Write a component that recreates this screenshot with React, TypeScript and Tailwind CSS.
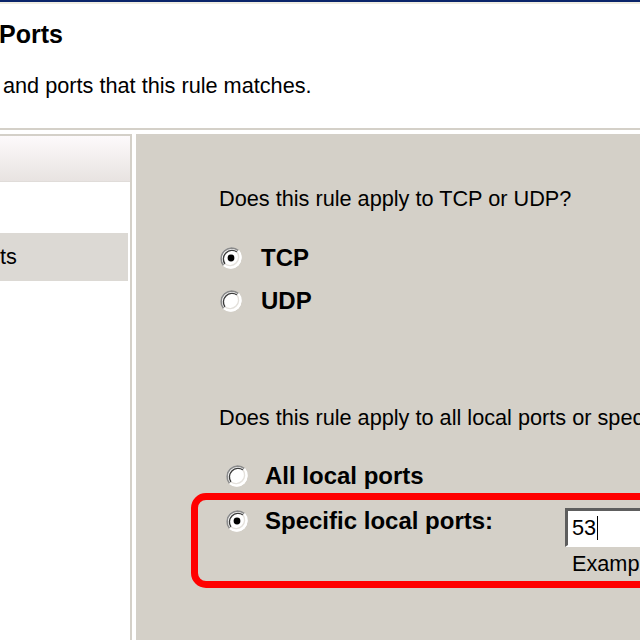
import React from "react";

const font = { fontFamily: '"Liberation Sans", Arial, sans-serif' };

function Radio({ checked }: { checked?: boolean }) {
  return (
    <svg width="24" height="24" viewBox="0 0 24 24" className="shrink-0">
      <circle cx="12" cy="12" r="10.5" fill="#ffffff" />
      {/* sunken edge: dark top-left, light bottom-right */}
      <path d="M4.6 19.4 A10.5 10.5 0 0 1 19.4 4.6" fill="none" stroke="#8a8a8a" strokeWidth="1.6" />
      <path d="M6 18 A8.6 8.6 0 0 1 18 6" fill="none" stroke="#3c3c3c" strokeWidth="1.4" />
      <path d="M19.4 4.6 A10.5 10.5 0 0 1 4.6 19.4" fill="none" stroke="#ffffff" strokeWidth="1.6" />
      <path d="M18 6 A8.6 8.6 0 0 1 6 18" fill="none" stroke="#e4e1dc" strokeWidth="1.4" />
      {checked && <circle cx="12" cy="12" r="3.4" fill="#000000" />}
    </svg>
  );
}

export default function App() {
  return (
    <div className="w-[640px] h-[640px] overflow-hidden bg-white text-black flex flex-col" style={font}>
      {/* Window chrome */}
      <div className="h-[2px] bg-[#0a246a]" />
      <div className="h-[2px] bg-[#efece2]" />

      {/* Wizard header */}
      <div className="h-[124px] flex flex-col">
        <h1 className="mt-[15px] -ml-[1px] text-[25px] leading-[30px] font-bold">Ports</h1>
        <p className="mt-[24px] pl-[3px] text-[21.7px] leading-[26px]">and ports that this rule matches.</p>
      </div>
      <div className="h-[2px] bg-[#d4d0c8]" />
      <div className="h-[4px]" />

      <div className="flex h-[506px]">
        {/* Steps list */}
        <div className="w-[132px] shrink-0 border-t-2 border-r-2 border-[#d4d0c8] flex flex-col">
          <div className="h-[46px] bg-gradient-to-b from-[#fdfafb] to-[#e8e3e1] border-b border-[#e0dcd9]" />
          <div className="h-[51px]" />
          <div className="h-[48px] mr-[2px] bg-[#dcd9d4] flex items-center text-[21.7px] leading-[26px]">ts</div>
        </div>

        {/* Page body */}
        <div className="ml-[4px] flex-1 bg-[#d4d0c8] pl-[55px] flex flex-col text-[21.7px] leading-[26px]">
          <div className="pl-[28px] pt-[52px]">Does this rule apply to TCP or UDP?</div>

          <div className="pl-[28px] mt-[32px] flex items-center h-[28px]">
            <Radio checked />
            <span className="ml-[18px] font-bold text-[24px] leading-[28px]">TCP</span>
          </div>
          <div className="pl-[28px] mt-[15px] flex items-center h-[28px]">
            <Radio />
            <span className="ml-[18px] font-bold text-[24px] leading-[28px]">UDP</span>
          </div>

          <div className="pl-[28px] mt-[90px] whitespace-nowrap">
            Does this rule apply to all local ports or specific local ports?
          </div>

          <div className="pl-[34px] mt-[31px] flex items-center h-[28px]">
            <Radio />
            <span className="ml-[16px] font-bold text-[24px] leading-[28px] whitespace-nowrap">All local ports</span>
          </div>

          {/* Highlighted choice */}
          <div className="mt-[3px] w-[600px] h-[95px] shrink-0 border-[7px] border-[#ff0000] rounded-[15px] flex">
            <div className="w-[367px] shrink-0 pl-[27px] pt-[7px]">
              <div className="flex items-center h-[28px]">
                <Radio checked />
                <span className="ml-[16px] font-bold text-[24px] leading-[28px] whitespace-nowrap">
                  Specific local ports:
                </span>
              </div>
            </div>
            <div className="flex-1 flex flex-col">
              <div className="mt-[8px] h-[39px] bg-white border-t-[3px] border-l-[3px] border-t-[#5e5e5e] border-l-[#5e5e5e] border-b-2 border-b-white flex items-center pl-[4px]">
                <span>53</span>
                <span className="ml-px w-px h-[24px] bg-black" />
              </div>
              <div className="mt-[4px] pl-[7px] whitespace-nowrap">Example: 80, 443, 5000-5010</div>
            </div>
          </div>
        </div>
      </div>
    </div>
  );
}
